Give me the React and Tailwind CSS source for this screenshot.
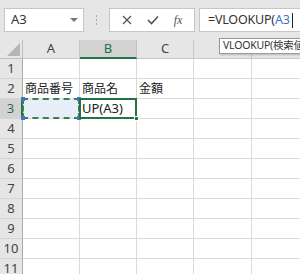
import React from 'react'

const FONT = { fontFamily: '"Noto Sans", "Noto Sans CJK JP", sans-serif' }

const COLS = [
  { key: 'A', label: 'A', w: 'w-[57px]' },
  { key: 'B', label: 'B', w: 'w-[57px]' },
  { key: 'C', label: 'C', w: 'w-[57px]' },
  { key: 'D', label: '', w: 'w-[58px]' }, // letter hidden under the tooltip
  { key: 'E', label: '', w: 'w-[60px]' },
]

const DATA = {
  2: { A: '商品番号', B: '商品名', C: '金額' },
}

function Toolbar() {
  return (
    <div className="h-[40px] bg-[#e6e6e6] flex items-start pt-[8px] pl-[4px]">
      {/* name box */}
      <div className="w-[80px] h-[24px] bg-white border border-[#c6c6c6] flex items-center justify-between pl-[6px] pr-[5px]">
        <span className="text-[13px] text-[#333]">A3</span>
        <svg width="8" height="5" viewBox="0 0 8 5"><path d="M0 0 L8 0 L4 4 Z" fill="#777" /></svg>
      </div>
      {/* dots */}
      <div className="w-[25px] h-[24px] flex flex-col items-center justify-center gap-[2px]">
        <div className="w-[1px] h-[2px] bg-[#aaa]" />
        <div className="w-[1px] h-[2px] bg-[#aaa]" />
        <div className="w-[1px] h-[2px] bg-[#aaa]" />
      </div>
      {/* buttons */}
      <div className="w-[86px] h-[24px] bg-white border border-[#c6c6c6] flex items-center justify-around px-[4px]">
        <svg width="10" height="10" viewBox="0 0 10 10"><path d="M1 1 L9 9 M9 1 L1 9" stroke="#555" strokeWidth="1.3" /></svg>
        <svg width="12" height="10" viewBox="0 0 12 10"><path d="M1 5 L4.5 8.5 L11 1.5" stroke="#555" strokeWidth="1.6" fill="none" /></svg>
        <span className="text-[12px] italic text-[#555]" style={{ fontFamily: '"Liberation Serif", serif' }}>fx</span>
      </div>
      {/* formula bar */}
      <div className="ml-[4px] flex-1 h-[24px] bg-white border border-[#c6c6c6] border-r-0 flex items-center pl-[8px]">
        <span className="text-[12.5px] tracking-[-0.2px] text-[#333] whitespace-nowrap">
          =VLOOKUP(<span className="text-[#4472c4]">A3</span>
        </span>
        <div className="w-[1px] h-[15px] bg-[#222] ml-[2px]" />
      </div>
    </div>
  )
}

function HeaderRow() {
  return (
    <div className="flex h-[19px]">
      <div className="w-[23px] shrink-0 bg-[#e6e6e6] border-r border-b border-[#bdbdbd] flex items-end justify-end pr-[2px] pb-[2px]">
        <svg width="13" height="13" viewBox="0 0 13 13"><path d="M13 0 L13 13 L0 13 Z" fill="#b5b5b5" /></svg>
      </div>
      {COLS.map((c) => {
        const sel = c.key === 'B'
        return (
          <div
            key={c.key}
            className={`${c.w} shrink-0 flex items-center justify-center text-[13px] border-r ${sel ? 'bg-[#d3d3d3] text-[#217346] border-b-2 border-b-[#217346] border-r-[#c0c0c0]' : 'bg-[#e6e6e6] text-[#444] border-b border-[#c8c8c8]'}`}
          >
            {c.label}
          </div>
        )
      })}
    </div>
  )
}

function Row({ n }) {
  const selRow = n === 3
  return (
    <div className="flex h-[20px]">
      <div className={`w-[23px] shrink-0 flex items-center justify-center text-[13px] border-b border-[#d4d4d4] ${selRow ? 'bg-[#d3d3d3] text-[#217346] border-r-2 border-r-[#217346]' : 'bg-[#e6e6e6] text-[#444] border-r border-r-[#a9a9a9]'}`}>
        {n}
      </div>
      {COLS.map((c) => {
        const txt = DATA[n] && DATA[n][c.key]
        const isA3 = n === 3 && c.key === 'A'
        const isB3 = n === 3 && c.key === 'B'
        return (
          <div
            key={c.key}
            className={`${c.w} shrink-0 relative border-r border-b border-[#dadada] flex items-center pl-[2px] text-[12px] text-[#222] whitespace-nowrap ${isA3 ? 'bg-[#e8eef8]' : 'bg-white'}`}
          >
            {txt}
            {isA3 && (
              <div className="absolute left-[-1px] top-[-1px] right-[-1px] bottom-[-1px] border-2 border-dashed border-[#3a7f55] z-10">
                <div className="absolute left-[-3px] top-[-3px] w-[4px] h-[4px] bg-[#4472c4]" />
                <div className="absolute right-[-3px] top-[-3px] w-[4px] h-[4px] bg-[#4472c4]" />
                <div className="absolute left-[-3px] bottom-[-3px] w-[4px] h-[4px] bg-[#4472c4]" />
                <div className="absolute right-[-3px] bottom-[-3px] w-[4px] h-[4px] bg-[#4472c4]" />
              </div>
            )}
            {isB3 && (
              <>
                <span className="text-[13px]">UP(A3)</span>
                <div className="absolute left-[-1px] top-[-1px] right-[-1px] bottom-[-1px] border-2 border-[#217346] z-10">
                  <div className="absolute right-[-4px] bottom-[-4px] w-[5px] h-[5px] bg-[#217346] border border-white" />
                </div>
              </>
            )}
          </div>
        )
      })}
    </div>
  )
}

export default function App() {
  return (
    <div className="w-[300px] h-[274px] overflow-hidden bg-white relative" style={FONT}>
      <Toolbar />
      <HeaderRow />
      {[1, 2, 3, 4, 5, 6, 7, 8, 9, 10, 11].map((n) => (
        <Row key={n} n={n} />
      ))}
      {/* function tooltip */}
      <div className="absolute left-[219px] top-[38px] h-[16px] pl-[3px] pr-[10px] bg-white border border-[#9a9a9a] shadow-[1px_1px_2px_rgba(0,0,0,0.2)] flex items-center text-[10.5px] tracking-[-0.2px] text-[#333] whitespace-nowrap">
        VLOOKUP(検索値
      </div>
    </div>
  )
}
